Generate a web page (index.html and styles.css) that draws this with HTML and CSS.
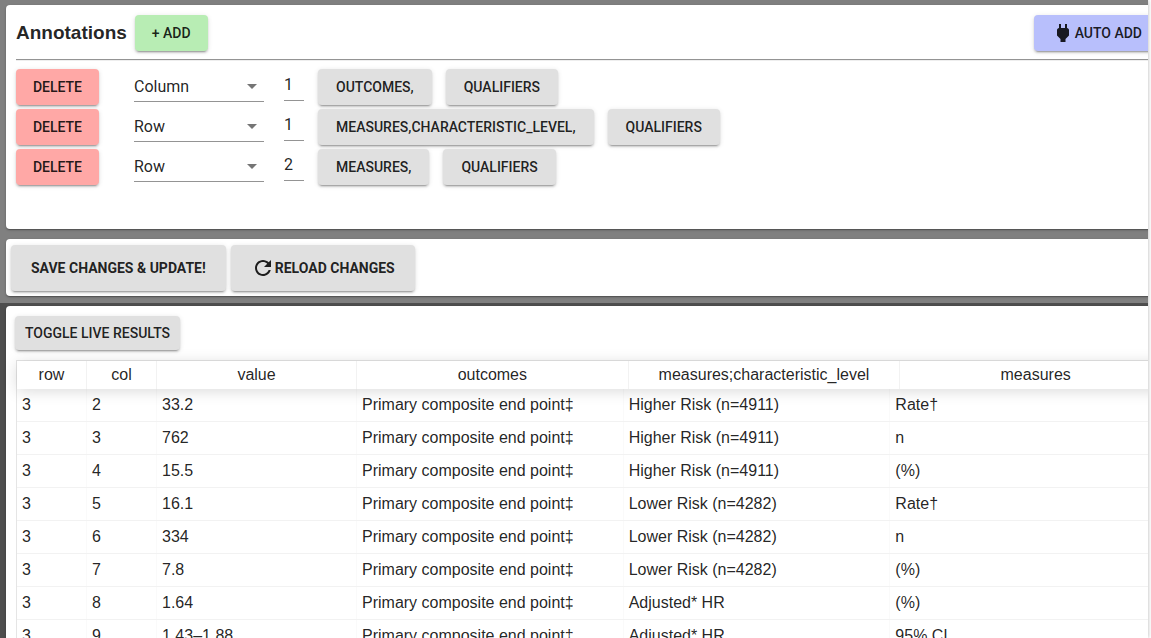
FILE: index.html
```html
<!DOCTYPE html>
<html lang="en">
<head>
<meta charset="utf-8">
<meta name="viewport" content="width=device-width, initial-scale=1">
<title>Annotations</title>
<link rel="stylesheet" href="styles.css">
</head>
<body>
<main class="app">
  <div class="editor">
    <section class="panel annotations">
      <header class="annotations-head">
        <h3 class="title">Annotations</h3>
        <button class="btn btn-add" type="button">+ Add</button>
        <button class="btn btn-auto" type="button">
          <svg class="icon" viewBox="0 0 24 24" aria-hidden="true"><path d="M16 7V3h-2v4h-4V3H8v4C7 7 6 8 6 9v5.500L9.500 18v3h5v-3l3.500-3.500V9c0-1-1-2-2-2z"/></svg>Auto Add
        </button>
      </header>
      <hr class="rule">
      <div class="annotation">
        <button class="btn btn-delete" type="button">Delete</button>
        <div class="select">
          <select class="select-field" aria-label="Annotation 1 type"><option selected>Column</option><option>Row</option></select>
          <svg class="select-arrow" viewBox="0 0 24 24" aria-hidden="true"><path d="M7 10l5 5 5-5z"/></svg>
        </div>
        <input class="number" type="text" value="1" aria-label="Annotation 1 number">
        <div class="tags">
          <button class="btn" type="button">Outcomes,</button>
          <button class="btn" type="button">Qualifiers</button>
        </div>
      </div>
      <div class="annotation">
        <button class="btn btn-delete" type="button">Delete</button>
        <div class="select">
          <select class="select-field" aria-label="Annotation 2 type"><option>Column</option><option selected>Row</option></select>
          <svg class="select-arrow" viewBox="0 0 24 24" aria-hidden="true"><path d="M7 10l5 5 5-5z"/></svg>
        </div>
        <input class="number" type="text" value="1" aria-label="Annotation 2 number">
        <div class="tags">
          <button class="btn" type="button">Measures,characteristic_level,</button>
          <button class="btn" type="button">Qualifiers</button>
        </div>
      </div>
      <div class="annotation">
        <button class="btn btn-delete" type="button">Delete</button>
        <div class="select">
          <select class="select-field" aria-label="Annotation 3 type"><option>Column</option><option selected>Row</option></select>
          <svg class="select-arrow" viewBox="0 0 24 24" aria-hidden="true"><path d="M7 10l5 5 5-5z"/></svg>
        </div>
        <input class="number" type="text" value="2" aria-label="Annotation 3 number">
        <div class="tags">
          <button class="btn" type="button">Measures,</button>
          <button class="btn" type="button">Qualifiers</button>
        </div>
      </div>
    </section>
    <section class="panel actions">
      <button class="btn btn-large" type="button">Save Changes &amp; Update!</button>
      <button class="btn btn-large" type="button"><svg class="icon" viewBox="0 0 24 24" aria-hidden="true"><path d="M17.650 6.350C16.200 4.900 14.210 4 12 4c-4.420 0-7.990 3.580-7.990 8s3.570 8 7.990 8c3.730 0 6.840-2.550 7.730-6h-2.080c-.820 2.330-3.040 4-5.650 4-3.310 0-6-2.690-6-6s2.690-6 6-6c1.660 0 3.140.690 4.220 1.780L13 11h7V4l-2.350 2.350z"/></svg>Reload Changes</button>
    </section>
  </div>
  <div class="results">
    <section class="panel live">
      <button class="btn btn-toggle" type="button">Toggle Live Results</button>
      <table class="grid">
        <thead class="grid-head">
          <tr class="grid-row"><th>row</th><th>col</th><th>value</th><th>outcomes</th><th>measures;characteristic_level</th><th>measures</th></tr>
        </thead>
        <tbody class="grid-body">
          <tr class="grid-row"><td>3</td><td>2</td><td>33.2</td><td>Primary composite end point‡</td><td>Higher Risk (n=4911)</td><td>Rate†</td></tr>
          <tr class="grid-row"><td>3</td><td>3</td><td>762</td><td>Primary composite end point‡</td><td>Higher Risk (n=4911)</td><td>n</td></tr>
          <tr class="grid-row"><td>3</td><td>4</td><td>15.5</td><td>Primary composite end point‡</td><td>Higher Risk (n=4911)</td><td>(%)</td></tr>
          <tr class="grid-row"><td>3</td><td>5</td><td>16.1</td><td>Primary composite end point‡</td><td>Lower Risk (n=4282)</td><td>Rate†</td></tr>
          <tr class="grid-row"><td>3</td><td>6</td><td>334</td><td>Primary composite end point‡</td><td>Lower Risk (n=4282)</td><td>n</td></tr>
          <tr class="grid-row"><td>3</td><td>7</td><td>7.8</td><td>Primary composite end point‡</td><td>Lower Risk (n=4282)</td><td>(%)</td></tr>
          <tr class="grid-row"><td>3</td><td>8</td><td>1.64</td><td>Primary composite end point‡</td><td>Adjusted* HR</td><td>(%)</td></tr>
          <tr class="grid-row"><td>3</td><td>9</td><td>1.43–1.88</td><td>Primary composite end point‡</td><td>Adjusted* HR</td><td>95% CI</td></tr>
        </tbody>
      </table>
    </section>
  </div>
</main>
</body>
</html>
```
FILE: styles.css
```css
* { box-sizing: border-box; }

body {
  margin: 0;
  height: 100vh;
  overflow: hidden;
  background: #fff;
  color: rgba(0, 0, 0, 0.87);
  font-family: "Liberation Sans", Arial, sans-serif;
  font-size: 16px;
}

.app {
  display: flex;
  flex-direction: column;
  height: 100vh;
  margin-right: 3px;
  overflow: hidden;
  box-shadow: 0 0 4px rgba(0, 0, 0, 0.3);
}

.editor {
  display: flex;
  flex-direction: column;
  gap: 10px;
  padding: 5px 0 7px 6px;
  background: #808080;
}

.results {
  flex: 1;
  padding: 3px 0 0 6px;
  background: #4e4e4e;
}

/* Panels run on past the right edge of the clipped app area. */
.panel {
  margin-right: -21px;
  background: #fff;
  border-radius: 4px;
  box-shadow: 0 1px 3px rgba(0, 0, 0, 0.2), 0 1px 1px rgba(0, 0, 0, 0.14), 0 2px 1px -1px rgba(0, 0, 0, 0.12);
}

.annotations { padding: 10px 10px 40px; }

.annotations-head {
  display: flex;
  align-items: center;
  gap: 8px;
}

.title {
  margin: 0;
  font-size: 19px;
  line-height: 22px;
}

.rule {
  margin: 8px 0;
  border: 0;
  border-top: 1px solid #949494;
  border-bottom: 1px solid #eee;
}

.btn {
  display: inline-flex;
  align-items: center;
  justify-content: center;
  min-height: 36px;
  padding: 6px 18px;
  border: 0;
  border-radius: 4px;
  background: #e0e0e0;
  color: rgba(0, 0, 0, 0.87);
  font-family: Roboto, sans-serif;
  font-size: 14px;
  font-weight: 500;
  line-height: 24px;
  text-transform: uppercase;
  white-space: nowrap;
  box-shadow: 0 3px 1px -2px rgba(0, 0, 0, 0.2), 0 2px 2px rgba(0, 0, 0, 0.14), 0 1px 5px rgba(0, 0, 0, 0.12);
}

.btn-add { padding: 6px 17px; background: #b8edb4; }
.btn-auto { padding: 6px 17px; margin-left: auto; background: #b8bffc; }
.btn-delete { padding: 6px 16px; background: #ffa8a6; }
.btn-large { min-height: 46px; padding: 6px 20px; font-weight: 700; }
.btn-toggle { min-height: 34px; padding: 5px 10px; }

.icon {
  width: 24px;
  height: 24px;
  fill: currentColor;
}

.annotation {
  display: grid;
  grid-template-columns: 83px 145px 20px 1fr;
  column-gap: 20px;
  height: 40px;
  align-items: start;
}

.select {
  position: relative;
  margin-left: 15px;
}

.select-field,
.number {
  display: block;
  width: 100%;
  height: 33px;
  padding: 0;
  border: 0;
  border-bottom: 1px solid #949494;
  border-radius: 0;
  background: transparent;
  color: inherit;
  font-family: Roboto, sans-serif;
  font-size: 16px;
  line-height: 32px;
  appearance: none;
}

.select-field { padding-top: 2px; }
.number { height: 32px; }

.select-arrow {
  position: absolute;
  top: 5px;
  right: 0;
  width: 24px;
  height: 24px;
  fill: #757575;
  pointer-events: none;
}

.tags {
  display: flex;
  gap: 14px;
  margin-left: -6px;
}

.actions {
  display: flex;
  gap: 5px;
  padding: 6px 5px 5px;
}

.live {
  height: 100%;
  padding: 10px 6px 0 10px;
}

.live .btn-toggle { margin-left: -1px; }

.grid {
  display: block;
  margin-top: 10px;
  margin-right: -10px;
  border: 1px solid rgba(0, 0, 0, 0.1);
  line-height: 18px;
}

.grid-head,
.grid-body { display: block; }

.grid-head { box-shadow: 0 2px 15px rgba(0, 0, 0, 0.15); }

.grid-body { padding-right: 15px; }

.grid-row {
  display: grid;
  grid-template-columns: 70px 70px 200px 1fr 1fr 1fr;
}

.grid-body .grid-row { border-bottom: 1px solid rgba(0, 0, 0, 0.05); }

.grid th {
  padding: 5px;
  border-right: 1px solid rgba(0, 0, 0, 0.05);
  font-weight: 400;
  text-align: center;
}

.grid td {
  padding: 7px 5px;
  border-right: 1px solid rgba(0, 0, 0, 0.02);
}
```
